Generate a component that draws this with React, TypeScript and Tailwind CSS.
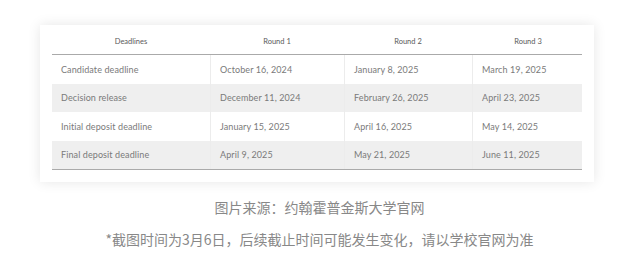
import React from "react";

const rows = [
  ["Candidate deadline", "October 16, 2024", "January 8, 2025", "March 19, 2025"],
  ["Decision release", "December 11, 2024", "February 26, 2025", "April 23, 2025"],
  ["Initial deposit deadline", "January 15, 2025", "April 16, 2025", "May 14, 2025"],
  ["Final deposit deadline", "April 9, 2025", "May 21, 2025", "June 11, 2025"],
];

const headers = ["Deadlines", "Round 1", "Round 2", "Round 3"];

export default function App() {
  return (
    <div className="w-[639px] h-[267px] bg-white overflow-hidden">
      <div className="ml-[40px] mt-[25px] w-[554px] bg-white shadow-[0_0_12px_rgba(0,0,0,0.10)] px-[12px] pt-[4px] pb-[12px] font-['Lato',sans-serif]">
        <div className="grid grid-cols-[158px_134px_128px_112px] h-[26px] border-b border-[#aaaaaa] items-center text-[7.5px] text-[#5a5a5a]">
          {headers.map((h) => (
            <div key={h} className="text-center">{h}</div>
          ))}
        </div>
        <div className="border-b-[1.5px] border-[#aaaaaa]">
          {rows.map((r, i) => (
            <div
              key={i}
              className={`grid grid-cols-[158px_134px_128px_112px] h-[28.5px] items-stretch text-[9px] tracking-[0.1px] text-[#7a7a7a] ${i % 2 === 1 ? "bg-[#efefef]" : "bg-white"}`}
            >
              {r.map((c, j) => (
                <div
                  key={j}
                  className={`flex items-center pl-[9px] ${j > 0 ? "border-l border-[#ececec]" : ""}`}
                >
                  {c}
                </div>
              ))}
            </div>
          ))}
        </div>
      </div>
      <div className="mt-[15px] text-center text-[14px] leading-[20px] text-[#888888] font-['Noto_Sans_CJK_SC',sans-serif]">
        图片来源：约翰霍普金斯大学官网
      </div>
      <div className="mt-[12px] text-center text-[14px] leading-[20px] text-[#888888] font-['Noto_Sans_CJK_SC',sans-serif]">
        *截图时间为3月6日，后续截止时间可能发生变化，请以学校官网为准
      </div>
    </div>
  );
}
